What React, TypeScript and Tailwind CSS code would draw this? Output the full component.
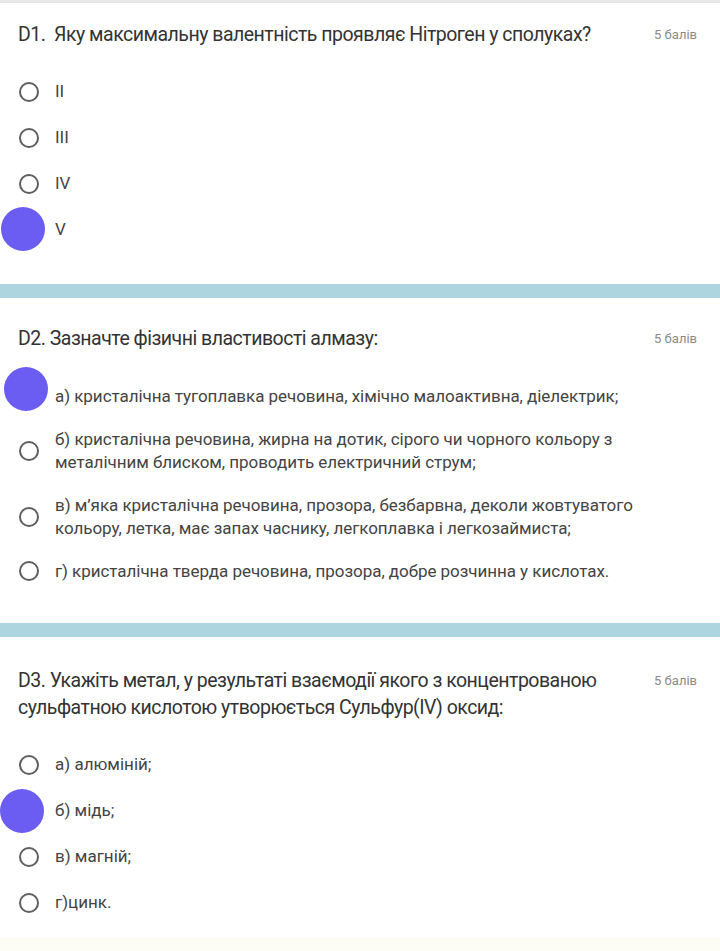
import React from "react";

type Opt = { lines: string[]; filled?: boolean };

function Radio({ filled, cls }: { filled?: boolean; cls?: string }) {
  return (
    <div className="relative w-[20px] h-[20px] shrink-0">
      <div className="w-[20px] h-[20px] rounded-full border-2 border-[#5f5f5f]" />
      {filled && <div className={"absolute w-[44px] h-[44px] rounded-full bg-[#6b5df2] " + (cls ?? "")} />}
    </div>
  );
}

function Points() {
  return <div className="text-[13px] text-[#8a8a8a] leading-[28px] shrink-0">5 балів</div>;
}

export default function App() {
  return (
    <div className="w-[720px] min-h-[951px] bg-white font-['Roboto',sans-serif] text-[#333]">
      <div className="h-[3px] bg-[#e8e8e8]" />
      {/* D1 */}
      <div className="pl-[18px] pr-[23px] pt-[18px] pb-[31px]">
        <div className="flex justify-between">
          <div className="text-[19.5px] leading-[28px] tracking-[-0.5px] text-[#333]">D1.&nbsp; Яку максимальну валентність проявляє Нітроген у сполуках?</div>
          <Points />
        </div>
        <div className="mt-[20px] flex flex-col">
          {[
            { t: "II" },
            { t: "III" },
            { t: "IV" },
            { t: "V", f: true },
          ].map((o, i) => (
            <div key={i} className="h-[46px] flex items-center">
              <div className="ml-[1px]">
                <Radio filled={o.f} cls="left-[-18px] top-[-13px]" />
              </div>
              <div className="ml-[16px] text-[17px] text-[#444]">{o.t}</div>
            </div>
          ))}
        </div>
      </div>
      <div className="h-[14px] bg-[#acd5e0]" />
      {/* D2 */}
      <div className="pl-[18px] pr-[23px] pt-[27px] pb-[40px]">
        <div className="flex justify-between">
          <div className="text-[19.5px] leading-[28px] tracking-[-0.5px] text-[#333]">D2. Зазначте фізичні властивості алмазу:</div>
          <Points />
        </div>
        <div className="mt-[32px] flex flex-col gap-[19px]">
          {[
            { lines: ["а) кристалічна тугоплавка речовина, хімічно малоактивна, діелектрик;"], filled: true },
            { lines: ["б) кристалічна речовина, жирна на дотик, сірого чи чорного кольору з", "металічним блиском, проводить електричний струм;"] },
            { lines: ["в) м’яка кристалічна речовина, прозора, безбарвна, деколи жовтуватого", "кольору, летка, має запах часнику, легкоплавка і легкозаймиста;"] },
            { lines: ["г) кристалічна тверда речовина, прозора, добре розчинна у кислотах."] },
          ].map((o: Opt, i) => (
            <div key={i} className="flex items-center">
              <div className="ml-[1px]">
                <Radio filled={o.filled} cls="left-[-15px] top-[-20px]" />
              </div>
              <div className="ml-[16px] text-[17px] leading-[23.5px] text-[#444] tracking-[-0.05px] whitespace-nowrap">
                {o.lines.map((l, j) => (
                  <div key={j}>{l}</div>
                ))}
              </div>
            </div>
          ))}
        </div>
      </div>
      <div className="h-[14px] bg-[#acd5e0]" />
      {/* D3 */}
      <div className="pl-[18px] pr-[23px] pt-[30px] pb-[11px]">
        <div className="flex justify-between">
          <div className="text-[19.5px] leading-[27px] tracking-[-0.5px] text-[#333]">
            <div>D3. Укажіть метал, у результаті взаємодії якого з концентрованою</div>
            <div>сульфатною кислотою утворюється Сульфур(IV) оксид:</div>
          </div>
          <Points />
        </div>
        <div className="mt-[21px] flex flex-col">
          {[
            { t: "а) алюміній;" },
            { t: "б) мідь;", f: true },
            { t: "в) магній;" },
            { t: "г)цинк." },
          ].map((o, i) => (
            <div key={i} className="h-[46px] flex items-center">
              <div className="ml-[1px]">
                <Radio filled={o.f} cls="left-[-19px] top-[-12px]" />
              </div>
              <div className="ml-[16px] text-[17px] text-[#444]">{o.t}</div>
            </div>
          ))}
        </div>
      </div>
      <div className="h-[14px] bg-[#fdfcf5]" />
    </div>
  );
}
